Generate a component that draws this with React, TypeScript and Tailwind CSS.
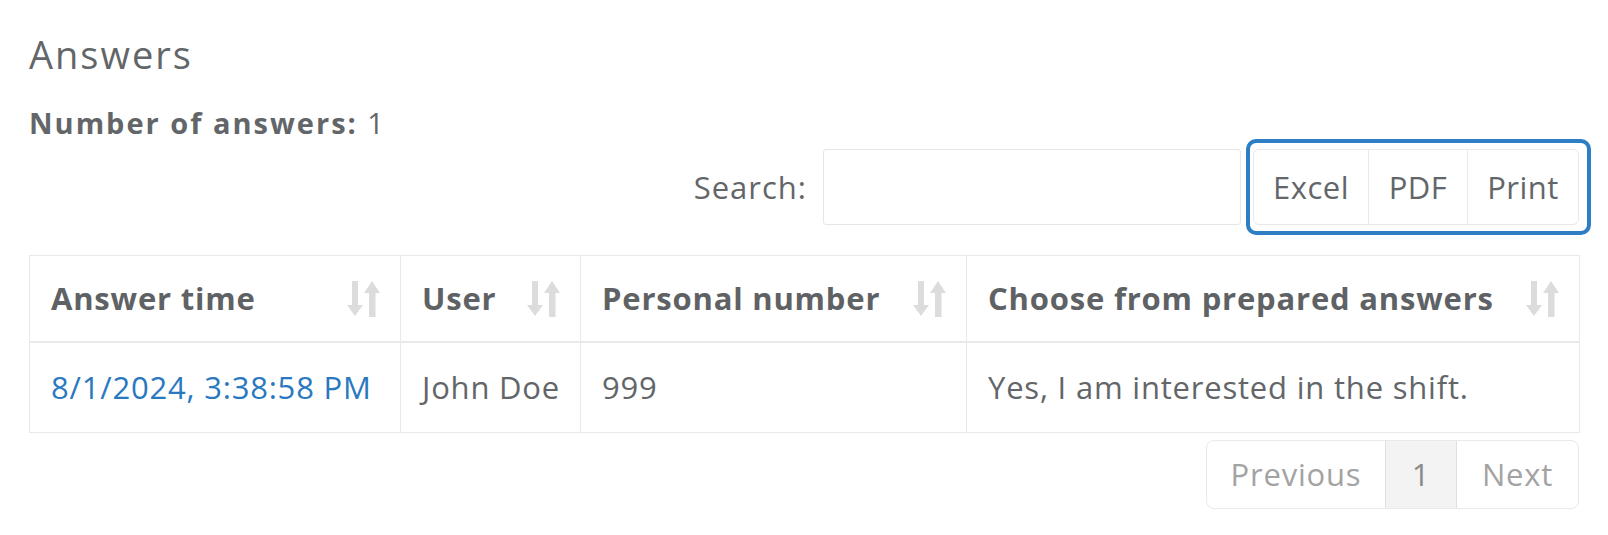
import React from 'react'

const columns = [
  { label: 'Answer time', width: 'w-[371px]' },
  { label: 'User', width: 'w-[180px]' },
  { label: 'Personal number', width: 'w-[386px]' },
  { label: 'Choose from prepared answers', width: 'w-[613px]' },
]

function SortIcon() {
  return (
    <svg width="34" height="36" viewBox="0 0 34 36" className="shrink-0" aria-hidden>
      <g fill="#dcdcdc">
        <rect x="5" y="0" width="6" height="25" />
        <polygon points="0,24 16,24 8,35" />
        <polygon points="17,12 33,12 25,0" />
        <rect x="22" y="11" width="6.5" height="25" />
      </g>
    </svg>
  )
}

const td = 'whitespace-nowrap border border-[#e9e9e9] px-[21px] py-[23px] leading-[43px]'

export default function App() {
  return (
    <div className="min-h-screen bg-white px-[29px] pt-[32px] font-['Open_Sans',sans-serif] text-[#636669]">
      <h4 className="text-[38px] leading-[44px] font-medium tracking-[2px]">Answers</h4>

      <p className="mt-[27px] text-[29px] leading-[40px] tracking-[2px]">
        <span className="font-bold">Number of answers:</span> 1
      </p>

      {/* search + export buttons */}
      <div className="mt-[-4px] mr-[-12px] flex items-center justify-end">
        <label className="flex items-center gap-4 text-[31px] tracking-[1px]">
          Search:
          <input
            type="search"
            className="h-[76px] w-[418px] rounded-[3px] border border-[#e6e6e6] bg-white px-3 outline-none"
          />
        </label>
        <div className="ml-[5px] rounded-[10px] border-4 border-[#2e7ec6] pt-[6px] pb-[6px] pl-[3px] pr-[8px]">
          <div className="flex h-[76px] overflow-hidden rounded-[6px] border border-[#e9e9e9] text-[31px] tracking-[0.5px]">
            <button className="w-[115px] border-r border-[#e9e9e9] text-center">Excel</button>
            <button className="w-[99px] border-r border-[#e9e9e9] text-center">PDF</button>
            <button className="w-[110px] text-center">Print</button>
          </div>
        </div>
      </div>

      <table className="mt-[20px] w-[1550px] table-fixed border-collapse border border-[#e9e9e9] text-[31px] tracking-[0.8px]">
        <thead>
          <tr>
            {columns.map(c => (
              <th
                key={c.label}
                className={`${c.width} border border-b-2 border-[#e9e9e9] py-[21px] pl-[21px] pr-[19px] text-left font-bold text-[#5f6265]`}
              >
                <div className="flex items-center justify-between leading-[43px]">
                  <span className="whitespace-nowrap">{c.label}</span>
                  <SortIcon />
                </div>
              </th>
            ))}
          </tr>
        </thead>
        <tbody>
          <tr>
            <td className={td}>
              <a href="#" className="text-[#2a78c0]">8/1/2024, 3:38:58 PM</a>
            </td>
            <td className={td}>John Doe</td>
            <td className={td}>999</td>
            <td className={td}>Yes, I am interested in the shift.</td>
          </tr>
        </tbody>
      </table>

      <div className="mt-[7px] flex justify-end">
        <ul className="flex h-[69px] overflow-hidden rounded-[8px] border border-[#e9e9e9] text-[31px] tracking-[0.8px]">
          <li className="flex w-[178px] items-center justify-center text-[#a3a3a3]">Previous</li>
          <li className="flex w-[72px] items-center justify-center border-x border-[#e0e0e0] bg-[#f3f3f3] text-[#8a8a8a]">
            1
          </li>
          <li className="flex w-[121px] items-center justify-center text-[#a3a3a3]">Next</li>
        </ul>
      </div>
    </div>
  )
}
